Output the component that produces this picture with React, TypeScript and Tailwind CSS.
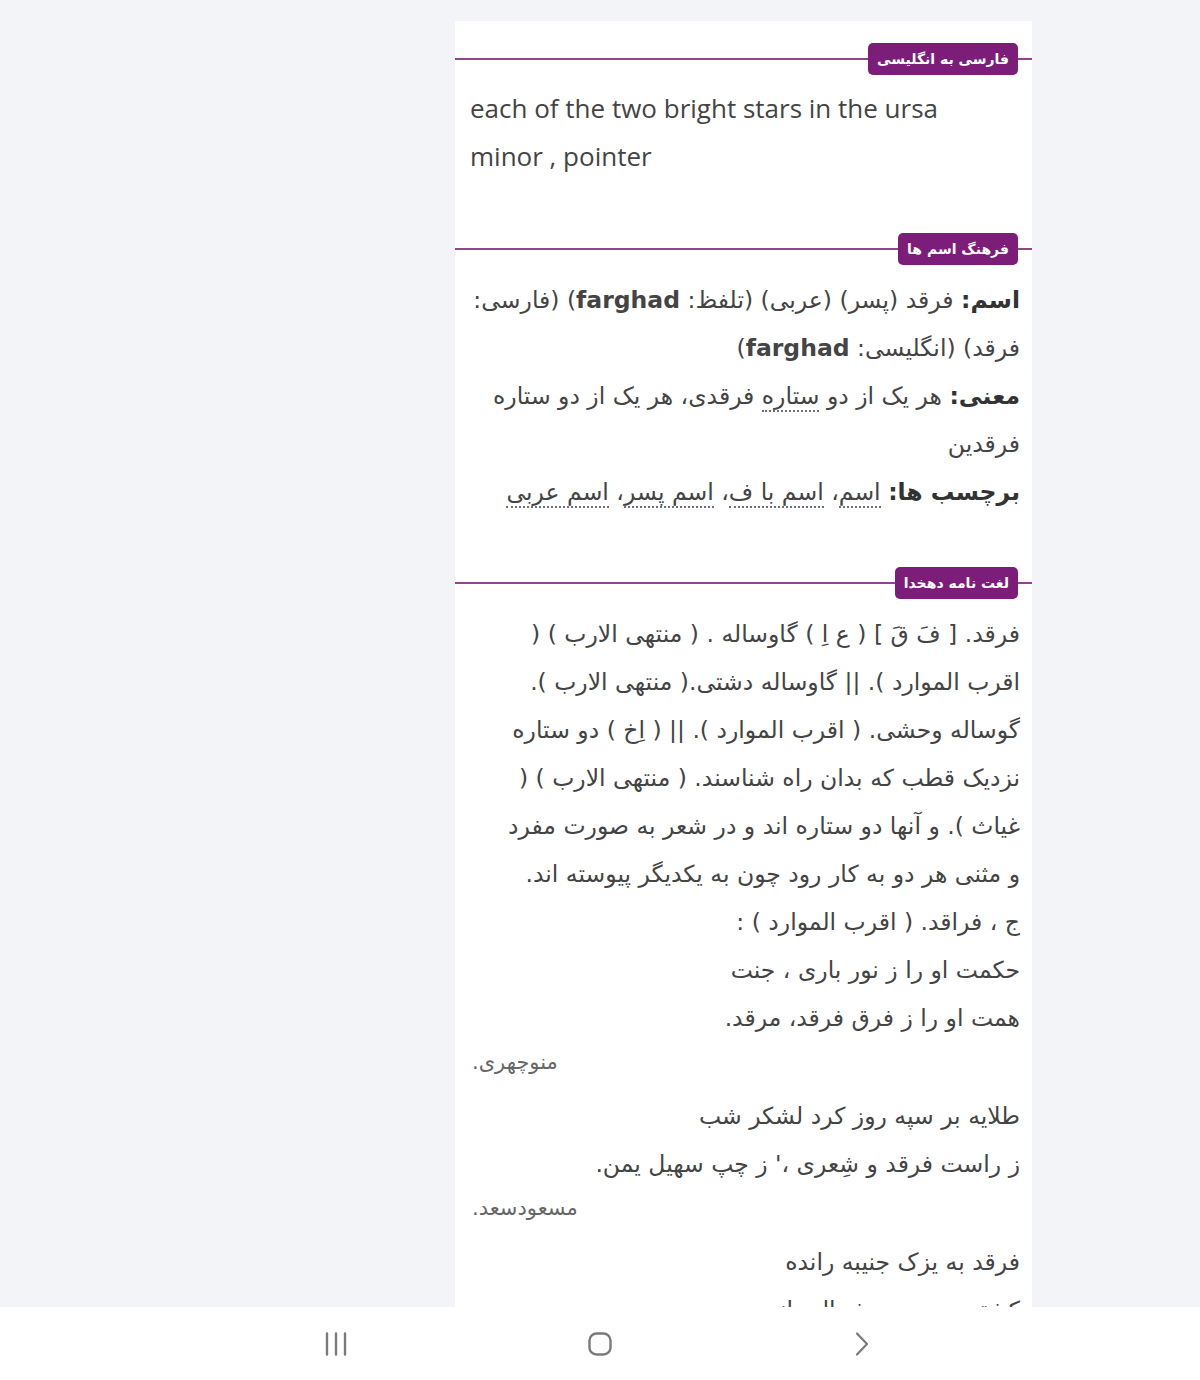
import React from "react";

const fa = { fontFamily: '"DejaVu Sans", "Noto Sans", sans-serif' };

function SectionHeader({ title }: { title: string }) {
  return (
    <div className="flex items-center">
      <div className="h-[2px] flex-1 bg-[#94448f]" />
      <div
        dir="rtl"
        className="flex h-[32px] items-center rounded-[5px] bg-[#7d1d7a] px-[9px] text-[14px] font-bold text-white"
        style={fa}
      >
        {title}
      </div>
      <div className="h-[2px] w-[14px] bg-[#94448f]" />
    </div>
  );
}

function Dotted({ children }: { children: React.ReactNode }) {
  return <span className="border-b-2 border-dotted border-[#6b6f80]">{children}</span>;
}

const dehkhoda1 = [
  "فرقد. [ فَ قَ ] ( ع اِ ) گاوساله . ( منتهی الارب ) (",
  "اقرب الموارد ). || گاوساله دشتی.( منتهی الارب ).",
  "گوساله وحشی. ( اقرب الموارد ). || ( اِخ ) دو ستاره",
  "نزدیک قطب که بدان راه شناسند. ( منتهی الارب ) (",
  "غیاث ). و آنها دو ستاره اند و در شعر به صورت مفرد",
  "و مثنی هر دو به کار رود چون به یکدیگر پیوسته اند.",
  "ج ، فراقد. ( اقرب الموارد ) :",
  "حکمت او را ز نور باری ، جنت",
  "همت او را ز فرق فرقد، مرقد.",
];

function Attribution({ name }: { name: string }) {
  return (
    <div dir="rtl" className="mb-[10px] text-left text-[21px] leading-[40px] text-[#666]" style={fa}>
      {name}
    </div>
  );
}

export default function App() {
  return (
    <div className="flex h-[1380px] flex-col bg-[#f3f4f8]">
      <div className="h-[1307px] overflow-hidden pt-[21px]">
        <div className="ml-[455px] w-[577px] bg-white pt-[22px] pb-[40px]">
          <SectionHeader title="فارسی به انگلیسی" />
          <p
            className="mt-[9px] px-[15px] text-[26px] leading-[48px] text-[#444]"
            style={{ fontFamily: '"Open Sans", "Liberation Sans", sans-serif' }}
          >
            each of the two bright stars in the ursa
            <br />
            minor , pointer
          </p>

          <div className="mt-[53px]">
            <SectionHeader title="فرهنگ اسم ها" />
          </div>
          <div dir="rtl" className="mt-[11px] pr-[12px] pl-[10px] text-[23.5px] leading-[48px] text-[#444]" style={fa}>
            <div>
              <b className="text-[#333]">اسم:</b> فرقد (پسر) (عربی) (تلفظ: <b>farghad</b>) (فارسی:
            </div>
            <div>
              فرقد) (انگلیسی: <b>farghad</b>)
            </div>
            <div>
              <b className="text-[#333]">معنی:</b> هر یک از دو <Dotted>ستاره</Dotted> فرقدی، هر یک از دو ستاره
            </div>
            <div>فرقدین</div>
            <div>
              <b className="text-[#333]">برچسب ها:</b> <Dotted>اسم</Dotted>، <Dotted>اسم با ف</Dotted>،{" "}
              <Dotted>اسم پسر</Dotted>، <Dotted>اسم عربی</Dotted>
            </div>
          </div>

          <div className="mt-[51px]">
            <SectionHeader title="لغت نامه دهخدا" />
          </div>
          <div className="mt-[11px] pr-[12px] pl-[17px] text-[#444]">
            <div dir="rtl" className="text-[23.5px] leading-[48px]" style={fa}>
              {dehkhoda1.map((l) => (
                <div key={l} className="whitespace-nowrap">
                  {l}
                </div>
              ))}
            </div>
            <Attribution name="منوچهری." />
            <div dir="rtl" className="text-[23.5px] leading-[48px]" style={fa}>
              <div>طلایه بر سپه روز کرد لشکر شب</div>
              <div>ز راست فرقد و شِعری ،' ز چپ سهیل یمن.</div>
            </div>
            <Attribution name="مسعودسعد." />
            <div dir="rtl" className="text-[23.5px] leading-[48px]" style={fa}>
              <div>فرقد به یزک جنیبه رانده</div>
              <div>کشتی به سوی شمال رانده</div>
            </div>
          </div>
        </div>
      </div>

      <nav className="flex h-[73px] items-center bg-white">
        <div className="flex w-[672px] justify-between pl-[325px] pr-[60px]">
          <svg width="22" height="24" viewBox="0 0 22 24" fill="none" stroke="#7a7a7a" strokeWidth="2.4" strokeLinecap="round">
            <path d="M2 1.5v21M11 1.5v21M20 1.5v21" />
          </svg>
          <svg width="24" height="24" viewBox="0 0 24 24" fill="none" stroke="#7a7a7a" strokeWidth="2.4">
            <rect x="1.5" y="1.5" width="21" height="21" rx="7" />
          </svg>
        </div>
        <div className="ml-[183px]">
          <svg width="14" height="24" viewBox="0 0 14 24" fill="none" stroke="#7a7a7a" strokeWidth="2.2" strokeLinecap="round" strokeLinejoin="round">
            <path d="M2 1.5 12 12 2 22.5" />
          </svg>
        </div>
      </nav>
    </div>
  );
}
